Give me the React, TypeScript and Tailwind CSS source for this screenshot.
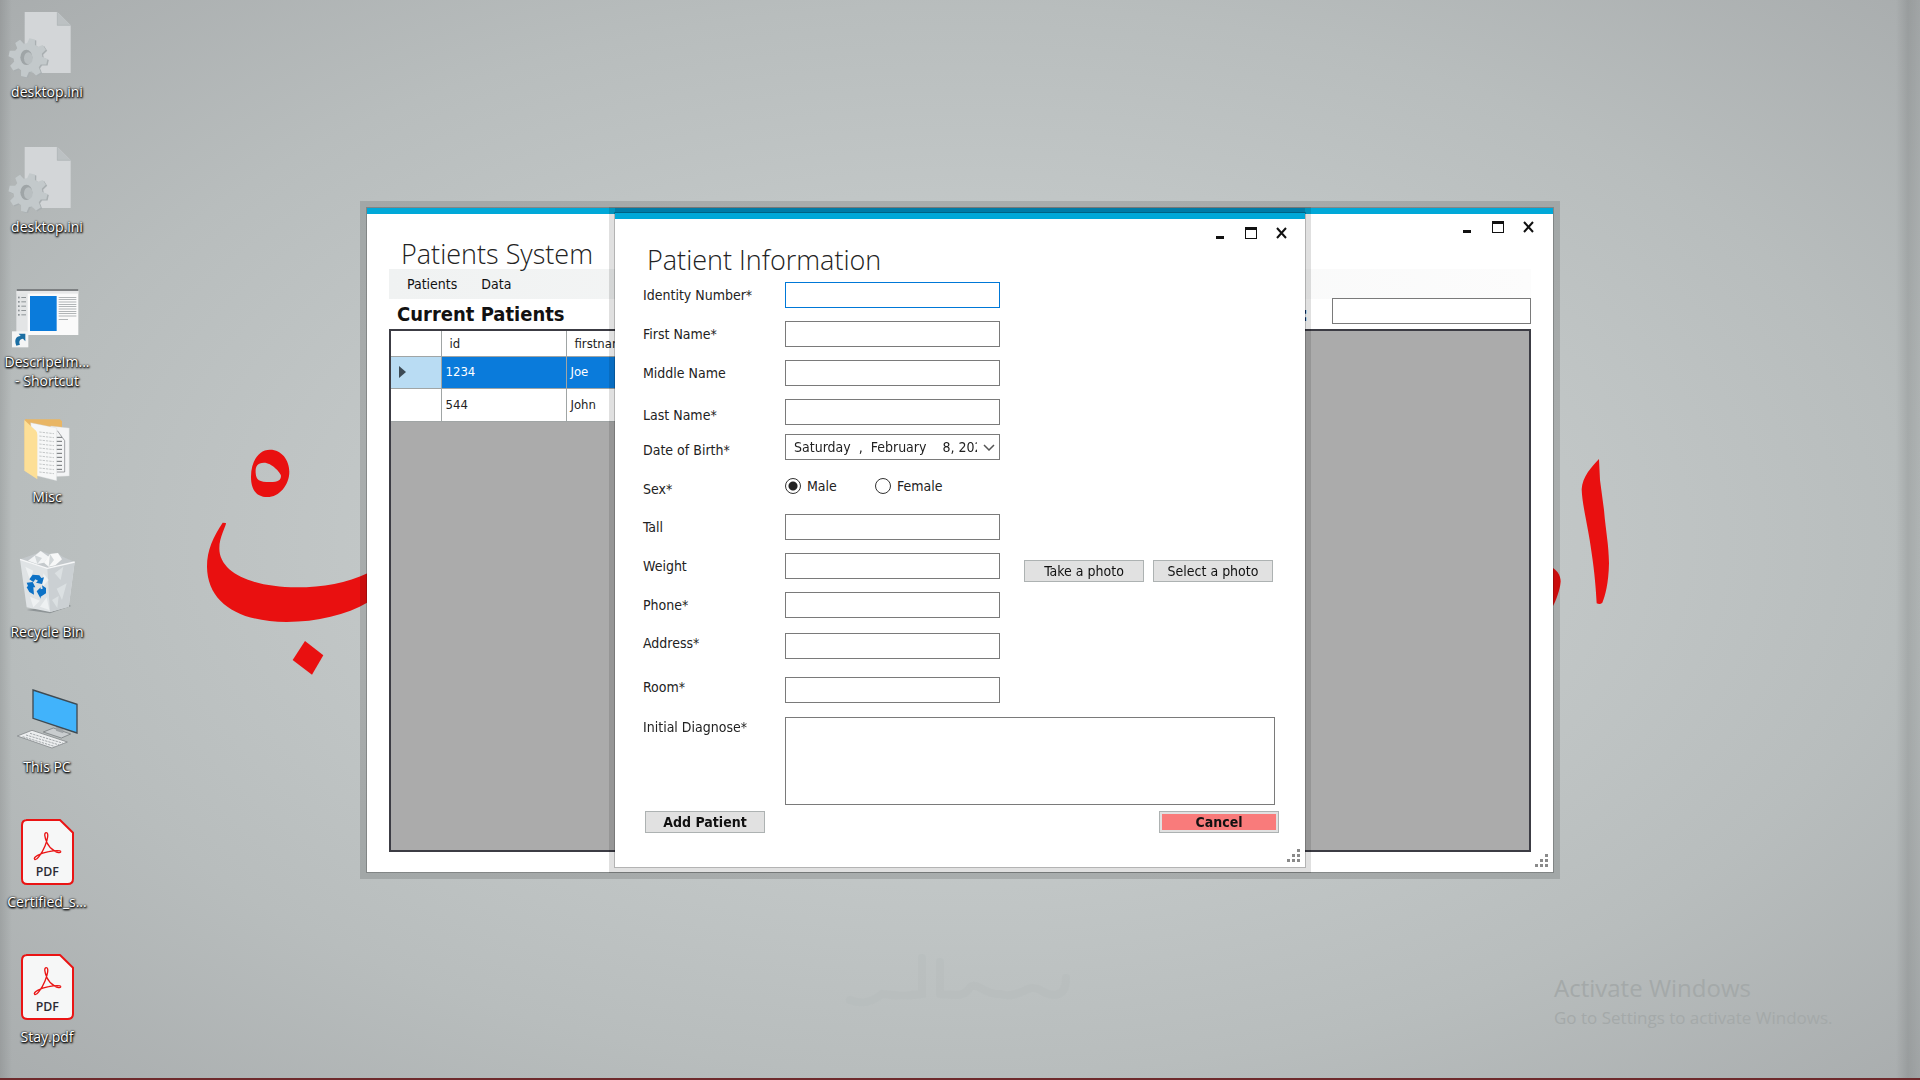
import { useState, type ReactNode } from "react";

const UI = "font-['DejaVu_Sans_Condensed','DejaVu_Sans',sans-serif]";
const SEGOE = "font-['Open_Sans','Noto_Sans',sans-serif]";

function IniIcon() {
  const teeth = [0, 45, 90, 135, 180, 225, 270, 315];
  return (
    <svg viewBox="0 24 282 210" className="h-[70px] w-[94px]" aria-hidden="true">
      <path d="M74 36H172L212 76V219H74Z" fill="#d3d6d8" />
      <path d="M172 36V76H212Z" fill="#bcc1c3" />
      <path d="M172 36V76H212" fill="none" stroke="#aab0b2" strokeWidth="2" />
      <g fill="#a9afb1" transform="translate(4 3)">
        <circle cx="84" cy="173" r="43" />
        {teeth.map((a) => (
          <path key={a} d="M72 134L76 115H93L97 134Z" transform={`rotate(${a + 12} 84 173)`} />
        ))}
      </g>
      <g fill="#c3c9cb">
        <circle cx="84" cy="173" r="43" />
        {teeth.map((a) => (
          <path key={a} d="M72 134L76 115H93L97 134Z" transform={`rotate(${a + 12} 84 173)`} />
        ))}
      </g>
      <ellipse cx="79" cy="172" rx="18" ry="23" fill="#9fa5a7" />
      <ellipse cx="85" cy="175" rx="13" ry="18" fill="#b9bfc1" />
    </svg>
  );
}

function ShortcutIcon() {
  return (
    <svg viewBox="0 834 282 210" className="h-[70px] w-[94px]" aria-hidden="true">
      <rect x="50" y="868" width="185" height="137" fill="#fafafa" />
      <rect x="50" y="874" width="33" height="131" fill="#e3e5e6" />
      <rect x="50" y="867" width="185" height="6" fill="#7d8082" />
      <rect x="50" y="873" width="185" height="8" fill="#e6e7e8" />
      <rect x="90" y="888" width="80" height="105" fill="#0a7bdb" />
      {[892, 905, 918, 931, 944].map((y) => (
        <g key={y} fill="#8d9396">
          <rect x="54" y={y - 2} width="5" height="5" />
          <rect x="64" y={y - 1} width="14" height="3" />
        </g>
      ))}
      {[891, 898, 905, 912, 919, 926, 933, 940, 947].map((y) => (
        <rect key={y} x="176" y={y} width="53" height="2" fill="#8d9396" />
      ))}
      <rect x="176" y="957" width="28" height="2" fill="#8d9396" />
      <rect x="36" y="994" width="49" height="48" fill="#f4f5f5" />
      <path d="M49 1037C42 1020 48 1008 62 1008L56 1001H76V1024L69 1016C58 1017 56 1026 60 1034Z" fill="#1a6ea3" />
    </svg>
  );
}

function FolderIcon() {
  return (
    <svg viewBox="0 39 282 210" className="h-[70px] w-[94px]" aria-hidden="true">
      <path d="M74 60Q76 56 82 58H180L186 64V200H74Z" fill="#e9b664" />
      <path d="M152 78L208 84V228L160 230Z" fill="#f3f4f5" stroke="#c7cacc" strokeWidth="1" />
      {[112, 124, 136, 148, 160, 172, 184, 196, 208].map((y) => (
        <path key={y} d={`M168 ${y}h18`} stroke="#6e7274" strokeWidth="3" />
      ))}
      <path d="M172 92L194 122V216H170" fill="none" stroke="#75797b" strokeWidth="2" />
      <path d="M92 68L170 84V242L104 226Z" fill="#f6f7f7" stroke="#cfd2d3" strokeWidth="1" />
      {[96, 108, 120, 132, 144, 156, 168, 180, 192, 204, 216].map((y) => (
        <path key={y} d={`M118 ${y}l44 5`} stroke="#c4c7c8" strokeWidth="3" strokeDasharray="7 3" />
      ))}
      <path d="M73 60L108 92Q112 96 112 104V238L73 212Z" fill="#fddf96" />
    </svg>
  );
}

function BinIcon() {
  return (
    <svg viewBox="0 444 282 210" className="h-[70px] w-[94px]" aria-hidden="true">
      <path d="M80 630L150 640L214 618L200 612Z" fill="#8e9496" />
      <path d="M60 478L142 505L224 486L206 620L150 636L80 622Z" fill="#dfe3e5" />
      <path d="M142 505L224 486L206 620L150 636Z" fill="#cbd0d3" />
      <path d="M60 478L112 460L120 452L148 462L172 458L188 470L224 486L142 505Z" fill="#c4c9cc" />
      <path d="M84 482L108 464L122 453L146 470L132 488L112 492Z" fill="#f2f4f5" />
      <path d="M132 488L150 462L174 459L186 478L166 496L146 500Z" fill="#f7f8f8" />
      <path d="M104 466L126 474L112 492Z M150 462L162 480L146 500Z" fill="#d2d7d9" />
      <path d="M76 500L100 512L90 540Z M130 520L146 540L128 560Z M90 590L120 602L100 622Z M120 620L140 592L148 630Z" fill="#eef1f2" />
      <path d="M164 520L190 500L182 540Z M170 566L200 550L186 600Z M156 600L176 588L172 624Z" fill="#dbe0e2" />
      <path d="M60 478L142 505L224 486" fill="none" stroke="#f6f7f8" strokeWidth="4" />
      <g fill="#0d72c6">
        <path d="M88 538L98 524L118 526L124 534L132 532L126 552L108 548L114 542L106 538L100 546Z" />
        <path d="M80 548L98 546L106 562L100 562L102 584L88 576L80 562L84 558Z" />
        <path d="M110 574L122 562V568L128 566L126 556L138 564L138 580L122 590V596Z" />
      </g>
    </svg>
  );
}

function PcIcon() {
  return (
    <svg viewBox="0 849 282 210" className="h-[70px] w-[94px]" aria-hidden="true">
      <path d="M130 996L160 984L212 1002L184 1014Z" fill="#c9cdcf" stroke="#6a6f72" strokeWidth="2" />
      <path d="M168 978L190 986V1000L168 992Z" fill="#9da2a5" />
      <path d="M99 870L231 913V999L99 955Z" fill="#41b3fb" stroke="#3f4a52" strokeWidth="4" />
      <path d="M52 1008L96 991L202 1026L156 1044Z" fill="#eceeef" stroke="#74797c" strokeWidth="2" />
      <path d="M68 1010L166 1040M78 1005L178 1035M90 1000L190 1030" stroke="#a3a8ab" strokeWidth="3" strokeDasharray="7 3" />
    </svg>
  );
}

function PdfIcon() {
  return (
    <svg viewBox="0 54 282 210" className="h-[70px] w-[94px]" aria-hidden="true">
      <path d="M80 60H180L219 98V236Q219 252 203 252H82Q66 252 66 236V76Q66 60 82 60Z" fill="#f6f7f7" stroke="#ea1414" strokeWidth="6" strokeLinejoin="round" />
      <path
        d="M104 178C98 172 120 160 146 155C164 151 184 150 182 156C178 164 150 148 141 128C133 110 132 98 139 98C147 98 143 118 135 138C126 160 110 182 104 178Z"
        fill="none"
        stroke="#ea1414"
        strokeWidth="4"
      />
      <text x="142" y="227" textAnchor="middle" fontSize="37" fontWeight="600" fill="#2b2b35" fontFamily="Open Sans, sans-serif">
        PDF
      </text>
    </svg>
  );
}

const shortcuts: { icon: ReactNode; name: string }[] = [
  { icon: <IniIcon />, name: "desktop.ini" },
  { icon: <IniIcon />, name: "desktop.ini" },
  { icon: <ShortcutIcon />, name: "DescripeIm... - Shortcut" },
  { icon: <FolderIcon />, name: "Misc" },
  { icon: <BinIcon />, name: "Recycle Bin" },
  { icon: <PcIcon />, name: "This PC" },
  { icon: <PdfIcon />, name: "Certified_s..." },
  { icon: <PdfIcon />, name: "Stay.pdf" },
];

function Wallpaper() {
  return (
    <>
      <div className="absolute inset-0 bg-[radial-gradient(ellipse_at_center,#c8cece_0%,#c3c8c8_40%,#b8bdbd_70%,#a9adae_100%)]" />
      <div className="absolute inset-y-0 left-0 w-3 bg-gradient-to-r from-black/10 to-transparent" />
      <div className="absolute inset-y-0 right-0 w-6 bg-gradient-to-r from-black/0 via-black/10 to-black/5" />
      <svg className="absolute left-0 top-0 h-[1080px] w-[1920px]" viewBox="0 0 1920 1080" aria-hidden="true">
        <g fill="none" stroke="#b4b9b9" strokeOpacity="0.3" strokeWidth="8" strokeLinecap="round">
          <path d="M1066 978C1066 1000 1050 996 1040 990C1028 982 1020 1000 1000 994M1000 994C985 996 975 978 968 990C962 998 950 994 940 994M940 994V962M922 958V994C905 996 900 996 882 994M882 994C870 1004 860 1004 850 1000" />
        </g>
        <g fill="#e91010">
          <g transform="translate(190 430) scale(0.3333)">
            <path
              fillRule="evenodd"
              d="M240 59C275 59 298 90 298 125C298 165 268 201 232 201C200 201 183 180 183 140C183 95 205 59 240 59ZM222 98C200 98 196 112 197 128C198 150 208 156 240 156C265 156 273 150 273 137C272 128 245 98 222 98Z"
            />
            <path d="M98 278L108 279C108 290 88 320 88 355C88 430 190 472 320 472C400 472 470 460 534 429V517C470 555 380 576 290 576C150 576 52 520 51 410C51 360 70 320 98 278Z" />
            <path d="M345 633L400 676L366 734L308 690Z" />
          </g>
          <g transform="translate(1540 440) scale(0.3333)">
            <path d="M177 57L180 120L192 210C198 280 206 310 207 370C206 430 195 470 187 488Q180 495 170 490C168 450 164 400 155 340C145 260 127 200 125 148C127 110 155 80 177 57Z" />
            <path d="M39 384C55 395 62 410 62 425C60 450 48 480 39 498Z" />
          </g>
        </g>
      </svg>
      <div className="absolute inset-x-0 bottom-0 h-0.5 bg-[#6e2a2c]" />
    </>
  );
}

function WindowButtons() {
  return (
    <div className="flex gap-[11px]">
      <button aria-label="Minimize" className="flex h-5 w-5 items-center justify-center">
        <svg viewBox="0 0 20 20" className="h-5 w-5">
          <path d="M6 14h8v3H6z" fill="#111" />
        </svg>
      </button>
      <button aria-label="Maximize" className="flex h-5 w-5 items-center justify-center">
        <svg viewBox="0 0 20 20" className="h-5 w-5">
          <path fillRule="evenodd" d="M4 5h12v12H4zM5 8v8h10V8z" fill="#111" />
        </svg>
      </button>
      <button aria-label="Close" className="flex h-5 w-5 items-center justify-center">
        <svg viewBox="0 0 20 20" className="h-5 w-5">
          <path d="M5 6L14 16M14 6L5 16" stroke="#111" strokeWidth="2" />
        </svg>
      </button>
    </div>
  );
}

function Grip() {
  return (
    <svg viewBox="0 0 13 13" className="absolute bottom-[5px] right-[5px] h-[13px] w-[13px]" aria-hidden="true">
      <path d="M10 0h3v3h-3zM10 5h3v3h-3zM5 5h3v3H5zM10 10h3v3h-3zM5 10h3v3H5zM0 10h3v3H0z" fill="#8a8a8a" />
    </svg>
  );
}

function PatientsWindow() {
  return (
    <main className="relative flex h-[664px] w-[1186px] flex-col border-t-[6px] border-[#00a8d8] bg-white px-[22px] pb-5 shadow-[0_0_0_1px_rgba(0,0,0,0.2),0_0_0_7px_rgba(0,0,0,0.13)]">
      <div className="flex h-[55px] items-start justify-between">
        <h1 className={`${SEGOE} relative z-10 pl-3 pt-[19px] text-[27px] font-light leading-[42px] text-[#222]`}>Patients System</h1>
        <div className="-mr-2 pt-0.5">
          <WindowButtons />
        </div>
      </div>
      <nav className={`${UI} flex h-[30px] items-center gap-6 bg-gradient-to-r from-[#f0f2f2] to-[#fcfcfc] pl-[18px] text-[14px] text-[#111]`}>
        <button>Patients</button>
        <button>Data</button>
      </nav>
      <div className={`${UI} flex h-[30px] items-center justify-between`}>
        <h2 className="pl-2 text-[20px] font-bold text-[#111]">Current Patients</h2>
        <div className="flex items-center gap-6">
          <label htmlFor="search" aria-label="Search" className="text-[20px] font-bold text-[#111]">
            :
          </label>
          <input id="search" className="-mt-1.5 h-[26px] w-[199px] border border-[#7a7a7a] bg-white px-1 text-[13px]" />
        </div>
      </div>
      <div className="min-h-0 flex-1 border-2 border-[#3c3c44] bg-[#ababab]">
        <table className={`${UI} table-fixed border-collapse bg-white text-[13px] text-[#222]`}>
          <thead>
            <tr className="h-[25px]">
              <th aria-label="Row" className="w-[50px] border-b border-r border-[#a0a5a5]" />
              <th className="w-[125px] border-b border-r border-[#a0a5a5] pl-2 text-left font-normal">id</th>
              <th className="w-[125px] border-b border-r border-[#a0a5a5] pl-2 text-left font-normal">firstname</th>
            </tr>
          </thead>
          <tbody>
            <tr className="h-[32px] bg-[#0a7bdb] text-white">
              <td className="border-b border-r border-[#a0a5a5] bg-[#b9dcf3] pl-2">
                <svg viewBox="0 0 7 12" className="h-3 w-[7px]" aria-hidden="true">
                  <path d="M0 0L7 6L0 12Z" fill="#3c4a55" />
                </svg>
              </td>
              <td className="border-b border-r border-[#a0a5a5] pl-1">1234</td>
              <td className="border-b border-r border-[#a0a5a5] pl-1">Joe</td>
            </tr>
            <tr className="h-[33px]">
              <td className="border-b border-r border-[#a0a5a5]" />
              <td className="border-b border-r border-[#a0a5a5] pl-1">544</td>
              <td className="border-b border-r border-[#a0a5a5] pl-1">John</td>
            </tr>
          </tbody>
        </table>
      </div>
      <Grip />
    </main>
  );
}

const textBox = "h-[26px] w-[215px] border border-[#7a7a7a] bg-white px-1 text-[14px] outline-none focus:border-[#0078d7]";
const grayButton = "h-[22px] w-[120px] border border-[#adb2b2] bg-[#e1e1e1] text-[14px] leading-5 text-[#111]";

function Row({ id, label, align, children }: { id?: string; label: string; align: string; children: ReactNode }) {
  return (
    <div className="flex h-[26px]">
      {id ? (
        <label htmlFor={id} className={`${align} w-[142px] leading-5`}>
          {label}
        </label>
      ) : (
        <span className={`${align} w-[142px] leading-5`}>{label}</span>
      )}
      {children}
    </div>
  );
}

function RadioOption({ name, checked, onPick }: { name: string; checked: boolean; onPick: () => void }) {
  return (
    <label className="flex w-[90px] items-center gap-1.5">
      <input
        type="radio"
        name="sex"
        checked={checked}
        onChange={onPick}
        className="h-4 w-4 appearance-none rounded-full border border-[#333] bg-white checked:bg-[radial-gradient(circle,#222_0_4px,#fff_5px)]"
      />
      {name}
    </label>
  );
}

function PatientDialog() {
  const [sex, setSex] = useState("Male");
  return (
    <section
      role="dialog"
      aria-labelledby="dialog-title"
      className={`${UI} relative w-[690px] border-t-[6px] border-[#00a8d8] bg-white pb-[34px] pl-7 pr-[19px] text-[14px] text-[#222] shadow-[0_0_0_1px_rgba(0,0,0,0.2),0_-5px_0_0_rgba(0,50,100,0.25),0_0_0_6px_rgba(0,0,0,0.12)]`}
    >
      <div className="flex h-[63px] items-start justify-between">
        <h2 id="dialog-title" className={`${SEGOE} pl-1 pt-5 text-[27px] font-light leading-[42px] text-[#222]`}>
          Patient Information
        </h2>
        <div className="-mr-1.5 pt-[3px]">
          <WindowButtons />
        </div>
      </div>
      <form onSubmit={(e) => e.preventDefault()}>
        <div className="flex gap-6">
          <div>
            <div className="flex flex-col gap-[13px]">
              <Row id="identity" label="Identity Number*" align="self-center">
                <input id="identity" autoFocus className={textBox} />
              </Row>
              <Row id="first" label="First Name*" align="self-center">
                <input id="first" className={textBox} />
              </Row>
              <Row id="middle" label="Middle Name" align="self-center">
                <input id="middle" className={textBox} />
              </Row>
              <Row id="last" label="Last Name*" align="self-end">
                <input id="last" className={textBox} />
              </Row>
            </div>
            <div className="flex flex-col gap-[13px] pt-[9px]">
              <Row id="birth" label="Date of Birth*" align="self-end">
                <div className="relative">
                  <select id="birth" className="h-[26px] w-[215px] appearance-none border border-[#7a7a7a] bg-white pl-2 pr-[22px] text-[14px] outline-none">
                    <option>{"Saturday\u00a0\u00a0,\u00a0\u00a0February\u00a0\u00a0\u00a0\u00a08, 2020"}</option>
                  </select>
                  <svg viewBox="0 0 12 7" className="pointer-events-none absolute right-[5px] top-[10px] h-[7px] w-3" aria-hidden="true">
                    <path d="M1 1L6 6L11 1" fill="none" stroke="#555" strokeWidth="1.500" />
                  </svg>
                </div>
              </Row>
              <Row label="Sex*" align="self-end">
                <div role="radiogroup" aria-label="Sex" className="flex items-center">
                  <RadioOption name="Male" checked={sex === "Male"} onPick={() => setSex("Male")} />
                  <RadioOption name="Female" checked={sex === "Female"} onPick={() => setSex("Female")} />
                </div>
              </Row>
            </div>
            <div className="flex flex-col gap-[13px] pt-[15px]">
              <Row id="tall" label="Tall" align="self-center">
                <input id="tall" className={textBox} />
              </Row>
              <Row id="weight" label="Weight" align="self-center">
                <input id="weight" className={textBox} />
              </Row>
              <Row id="phone" label="Phone*" align="self-center">
                <input id="phone" className={textBox} />
              </Row>
            </div>
            <div className="flex flex-col gap-[18px] pt-[15px]">
              <Row id="address" label="Address*" align="self-start">
                <input id="address" className={textBox} />
              </Row>
              <Row id="room" label="Room*" align="self-start">
                <input id="room" className={textBox} />
              </Row>
            </div>
          </div>
          <div className="flex flex-col pt-[278px]">
            <div className="flex gap-[9px]">
              <button type="button" className={grayButton}>
                Take a photo
              </button>
              <button type="button" className={grayButton}>
                Select a photo
              </button>
            </div>
          </div>
        </div>
        <div className="flex pr-[11px] pt-[14px]">
          <label htmlFor="diagnose" className="w-[142px] leading-5">
            Initial Diagnose*
          </label>
          <textarea id="diagnose" className="h-[88px] flex-1 resize-none border border-[#7a7a7a] bg-white p-1 outline-none" />
        </div>
        <div className="flex justify-between pl-0.5 pr-[7px] pt-1.5">
          <button type="submit" className={`${grayButton} font-bold`}>
            Add Patient
          </button>
          <button type="button" className="h-[22px] w-[120px] border border-[#adb2b2] bg-[#e1e1e1] p-0.5 text-[14px] font-bold text-[#111]">
            <span className="block bg-[#f97b7b] leading-4">Cancel</span>
          </button>
        </div>
      </form>
      <Grip />
    </section>
  );
}

export default function App() {
  return (
    <div className="relative min-h-screen overflow-hidden bg-[#bfc4c4]">
      <Wallpaper />
      <div className={`${SEGOE} relative flex w-[94px] flex-col`}>
        {shortcuts.map((s, i) => (
          <a key={i} href="#" className="flex h-[135px] flex-col items-center pt-2">
            {s.icon}
            <span className="mt-1 w-[94px] px-1 text-center text-[14px] leading-[19px] text-white [text-shadow:0_0_2px_#000,1px_1px_2px_#000,0_1px_2px_#000]">
              {s.name}
            </span>
          </a>
        ))}
      </div>
      <div className={`${SEGOE} absolute bottom-12 right-[82px] w-[284px] whitespace-nowrap text-[#a4a9a9]`}>
        <p className="text-[24px] leading-8">Activate Windows</p>
        <p className="text-[17px] leading-7">Go to Settings to activate Windows.</p>
      </div>
      <div className="absolute inset-0 flex items-center justify-center">
        <PatientsWindow />
      </div>
      <div className="pointer-events-none absolute inset-0 flex items-center justify-center">
        <div className="pointer-events-auto">
          <PatientDialog />
        </div>
      </div>
    </div>
  );
}
